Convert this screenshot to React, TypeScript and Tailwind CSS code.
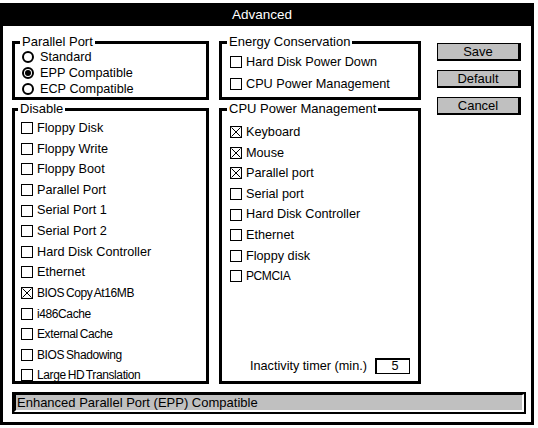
import React from 'react';

type Item = { label: string; checked?: boolean; narrow?: boolean };

const disableItems: Item[] = [
  { label: 'Floppy Disk' },
  { label: 'Floppy Write' },
  { label: 'Floppy Boot' },
  { label: 'Parallel Port' },
  { label: 'Serial Port 1' },
  { label: 'Serial Port 2' },
  { label: 'Hard Disk Controller' },
  { label: 'Ethernet' },
  { label: 'BIOS Copy At16MB', checked: true, narrow: true },
  { label: 'i486Cache', narrow: true },
  { label: 'External Cache', narrow: true },
  { label: 'BIOS Shadowing', narrow: true },
  { label: 'Large HD Translation', narrow: true },
];

const cpuItems: Item[] = [
  { label: 'Keyboard', checked: true },
  { label: 'Mouse', checked: true },
  { label: 'Parallel port', checked: true },
  { label: 'Serial port' },
  { label: 'Hard Disk Controller' },
  { label: 'Ethernet' },
  { label: 'Floppy disk' },
  { label: 'PCMCIA', narrow: true },
];

const CheckBox = ({ checked }: { checked?: boolean }) => (
  <svg width="12" height="12" viewBox="0 0 12 12" className="shrink-0">
    <rect x="0.5" y="0.5" width="11" height="11" fill="white" stroke="black" strokeWidth="1" />
    {checked && (
      <path d="M1.5 1.5L10.5 10.5M10.5 1.5L1.5 10.5" stroke="black" strokeWidth="1" />
    )}
  </svg>
);

const CheckRow = ({ item, className }: { item: Item; className: string }) => (
  <div className={`flex items-center gap-[4px] ${className}`}>
    <CheckBox checked={item.checked} />
    <span
      className={
        item.narrow
          ? 'text-[12px] leading-none tracking-[-0.4px] [word-spacing:-1px]'
          : 'text-[12.7px] leading-none'
      }
    >
      {item.label}
    </span>
  </div>
);

const Radio = ({ label, selected }: { label: string; selected?: boolean }) => (
  <div className="flex h-[16px] items-center gap-[6px]">
    <div className="flex h-[12px] w-[12px] items-center justify-center rounded-full border-2 border-black">
      {selected && <div className="h-[6px] w-[6px] rounded-full bg-black" />}
    </div>
    <span className="text-[12.7px] leading-none">{label}</span>
  </div>
);

const Group = ({
  title,
  legendClass,
  height,
  children,
}: {
  title: string;
  legendClass: string;
  height: string;
  children: React.ReactNode;
}) => (
  <fieldset className={`border-[3px] border-black ${height}`}>
    <legend className={`px-[2px] text-[13px] leading-[16px] ${legendClass}`}>{title}</legend>
    {children}
  </fieldset>
);

const Button = ({ label }: { label: string }) => (
  <button className="flex h-[18px] w-[84px] items-center justify-center border border-r-[3px] border-b-[2px] border-black bg-[#c0c0c0] text-[13px] leading-none text-black">
    {label}
  </button>
);

export default function App() {
  return (
    <div
      className="h-[428px] w-[538px] bg-white text-black"
      style={{ fontFamily: '"Liberation Sans", Arial, sans-serif' }}
    >
      <div className="mt-[3px] flex h-[422px] w-[534px] flex-col border-[3px] border-black">
        <div className="flex h-[20px] shrink-0 items-center justify-center bg-black pb-[3px] pr-[10px]">
          <span className="text-[13.5px] leading-none text-white">Advanced</span>
        </div>

        <div className="flex pl-[9px] pt-[8px]">
          <div className="flex w-[197px] flex-col gap-[1px]">
            <Group title="Parallel Port" legendClass="ml-[5px]" height="h-[66px]">
              <div className="-mt-[1px] flex flex-col pl-[7px]">
                <Radio label="Standard" />
                <Radio label="EPP Compatible" selected />
                <Radio label="ECP Compatible" />
              </div>
            </Group>
            <Group title="Disable" legendClass="ml-[3px]" height="h-[283px]">
              <div className="flex flex-col pl-[6px] pt-[1px]">
                {disableItems.map((it) => (
                  <CheckRow key={it.label} item={it} className="h-[20.6px]" />
                ))}
              </div>
            </Group>
          </div>

          <div className="ml-[10px] flex w-[202px] flex-col gap-[1px]">
            <Group title="Energy Conservation" legendClass="ml-[5px]" height="h-[66px]">
              <div className="flex flex-col pl-[8px] pt-[1px]">
                <CheckRow item={{ label: 'Hard Disk Power Down' }} className="h-[22px]" />
                <CheckRow item={{ label: 'CPU Power Management' }} className="h-[22px]" />
              </div>
            </Group>
            <Group title="CPU Power Management" legendClass="ml-[5px]" height="h-[283px]">
              <div className="flex h-[264px] flex-col pl-[8px]">
                <div className="flex flex-col pt-[5px]">
                  {cpuItems.map((it) => (
                    <CheckRow key={it.label} item={it} className="h-[20.6px]" />
                  ))}
                </div>
                <div className="mt-auto mb-[7px] flex items-center justify-end gap-[8px] pr-[8px]">
                  <span className="text-[12.7px] leading-none">Inactivity timer (min.)</span>
                  <div className="flex h-[16px] w-[35px] items-center justify-center border border-l-2 border-t-2 border-black pl-[4px] text-[12.7px] leading-none">
                    5
                  </div>
                </div>
              </div>
            </Group>
          </div>

          <div className="ml-[16px] flex flex-col gap-[9px] pt-[9px]">
            <Button label="Save" />
            <Button label="Default" />
            <Button label="Cancel" />
          </div>
        </div>

        <div className="ml-[9px] mt-[8px] h-[22px] w-[514px] border-2 border-black">
          <div className="flex h-full items-center border-l-2 border-t border-r-2 border-b-2 border-l-black border-t-black border-r-white border-b-white bg-[#c0c0c0] pl-px">
            <span className="text-[13px] leading-none">Enhanced Parallel Port (EPP) Compatible</span>
          </div>
        </div>
      </div>
    </div>
  );
}
